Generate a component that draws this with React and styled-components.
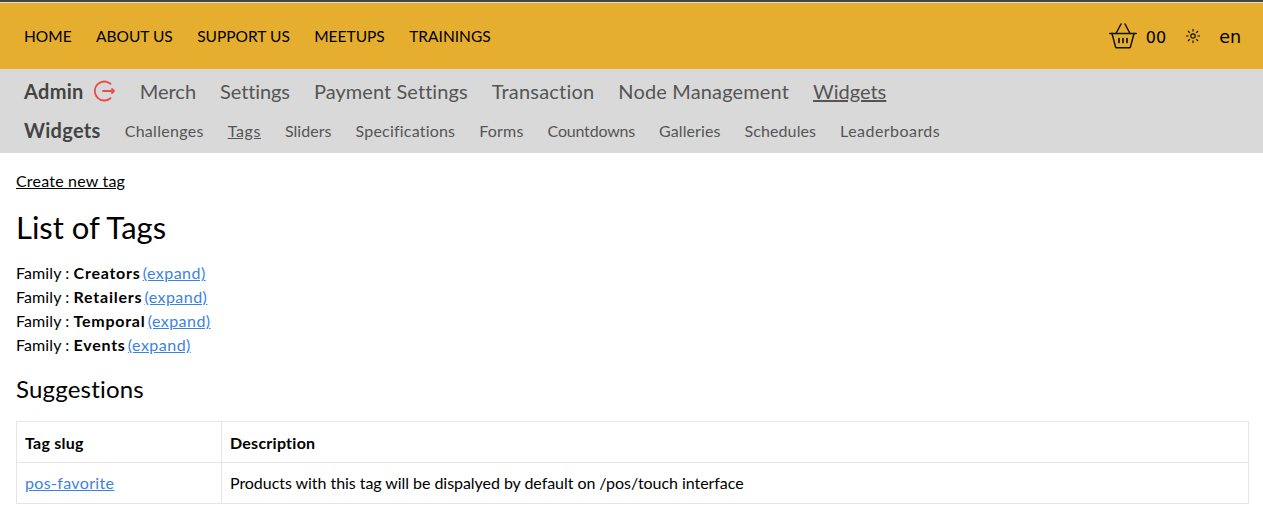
import React from 'react';
import styled, { createGlobalStyle } from 'styled-components';

const GlobalStyle = createGlobalStyle`
  html, body { margin: 0; padding: 0; background: #fff; }
  body { font-family: "Lato", "Liberation Sans", sans-serif; color: #000; }
  a { color: inherit; }
`;

const TopLine = styled.div`
  height: 2px;
  background: #444;
  border-bottom: 1px solid #ddd;
`;

const MainBar = styled.header`
  display: flex;
  align-items: center;
  justify-content: space-between;
  height: 66px;
  padding: 0 22px 0 24px;
  background: #e5ae2e;
`;

const MainNav = styled.nav`
  display: flex;
  gap: 24.4px;
  margin-top: -1px;
`;

const MainLink = styled.a`
  font-size: 15.5px;
  text-decoration: none;
  color: #000;
`;

const Tools = styled.div`
  display: flex;
  align-items: center;
`;

const Count = styled.span`
  font-family: "DejaVu Sans", sans-serif;
  font-size: 16px;
  margin: 2px 20px 0 9px;
`;

const Lang = styled.span`
  font-family: "DejaVu Sans", sans-serif;
  font-size: 17.5px;
  margin: 2px 0 0 19px;
`;

const AdminBar = styled.div`
  background: #d9d9d9;
  height: 84px;
  padding: 0 24px;
  color: #444;
`;

const AdminRow = styled.div`
  display: flex;
  align-items: center;
  height: ${p => p.$height}px;
  gap: 24px;
`;

const RowTitle = styled.strong`
  font-size: 20px;
  font-weight: 700;
  letter-spacing: 0.3px;
  color: #444;
`;

const AdminLink = styled.a`
  font-size: 20px;
  letter-spacing: ${p => p.$track}px;
  color: #555;
  text-decoration: ${p => (p.$active ? 'underline' : 'none')};
`;

const SubLink = styled.a`
  font-size: 16px;
  letter-spacing: ${p => p.$track}px;
  color: #555;
  text-decoration: ${p => (p.$active ? 'underline' : 'none')};
`;

const LogoutWrap = styled.span`
  display: inline-flex;
  margin: 0 0 0 -14px;
`;

const Content = styled.main`
  padding: 19px 14px 0 16px;
  font-size: 16px;
`;

const NewLink = styled.a`
  display: block;
  line-height: 18px;
  letter-spacing: 0.2px;
  color: #000;
`;

const Title = styled.h1`
  margin: 19px 0 16px;
  font-size: 31px;
  font-weight: 400;
  line-height: 36px;
`;

const Family = styled.div`
  line-height: 24px;
  letter-spacing: 0.1px;

  strong {
    letter-spacing: 0.75px;
  }
`;

const TextLink = styled.a`
  color: #3b82e6;
`;

const ExpandLink = styled(TextLink)`
  margin-left: -2px;
  letter-spacing: 0.47px;
`;

const Subtitle = styled.h2`
  margin: 17px 0 17px;
  font-size: 24px;
  font-weight: 400;
  letter-spacing: 0.2px;
  line-height: 30px;
`;

const Table = styled.table`
  width: 100%;
  table-layout: fixed;
  border-collapse: collapse;
  font-size: 16px;
`;

const Th = styled.th`
  box-sizing: border-box;
  border: 1px solid #e5e5e5;
  padding: 0 8px;
  height: 41px;
  text-align: left;
  font-weight: 700;
  letter-spacing: 0.25px;
  width: ${p => p.$width || 'auto'};
`;

const Td = styled.td`
  border: 1px solid #e5e5e5;
  padding: 0 8px 2px;
  height: 38px;
  letter-spacing: ${p => p.$spacing || '-0.05px'};
`;

const mainLinks = ['HOME', 'ABOUT US', 'SUPPORT US', 'MEETUPS', 'TRAININGS'];
const adminLinks = [
  { label: 'Merch', track: 0 },
  { label: 'Settings', track: -0.1 },
  { label: 'Payment Settings', track: 0.07 },
  { label: 'Transaction', track: 0.2 },
  { label: 'Node Management', track: 0.15 },
  { label: 'Widgets', track: 0 }
];
const widgetLinks = [
  { label: 'Challenges', track: 0.3 },
  { label: 'Tags', track: 0.6 },
  { label: 'Sliders', track: 0.05 },
  { label: 'Specifications', track: 0.2 },
  { label: 'Forms', track: 0.2 },
  { label: 'Countdowns', track: -0.2 },
  { label: 'Galleries', track: 0.1 },
  { label: 'Schedules', track: 0.1 },
  { label: 'Leaderboards', track: 0.45 }
];
const families = ['Creators', 'Retailers', 'Temporal', 'Events'];

const Basket = () => (
  <svg width="28" height="26" viewBox="0 0 28 26" fill="none" stroke="#111" strokeWidth="1.5" strokeLinecap="round" strokeLinejoin="round">
    <path d="M0.8 10.5h26.4" />
    <path d="M3 10.5l3.6 13.6a1 1 0 0 0 1 .7h12.8a1 1 0 0 0 1-.7L25 10.5" />
    <path d="M7 10.5l5-9.5M21 10.5l-5-9.5" />
    <path d="M10 15.5v4M14 15.5v4M18 15.5v4" strokeWidth="1.7" />
  </svg>
);

const Sun = () => (
  <svg width="14" height="14" viewBox="0 0 14 14" fill="none" stroke="#111" strokeWidth="1.2">
    <circle cx="7" cy="7" r="2.2" />
    <path d="M7 0v2.6M7 11.4V14M0 7h2.6M11.4 7H14M2 2l1.8 1.8M10.2 10.2L12 12M2 12l1.8-1.8M10.2 3.8L12 2" />
  </svg>
);

const Logout = () => (
  <svg width="22" height="22" viewBox="0 0 22 22" fill="none" stroke="#ea4b4b" strokeWidth="1.8" strokeLinecap="round" strokeLinejoin="round">
    <path d="M16.5 3.8A9.5 9.5 0 1 0 16.5 18.2" />
    <path d="M9 11h11M18 9l2 2-2 2" />
  </svg>
);

const App = () => (
  <>
    <GlobalStyle />
    <TopLine />
    <MainBar>
      <MainNav>
        {mainLinks.map(l => <MainLink href="#" key={l}>{l}</MainLink>)}
      </MainNav>
      <Tools>
        <Basket />
        <Count>00</Count>
        <Sun />
        <Lang>en</Lang>
      </Tools>
    </MainBar>
    <AdminBar>
      <AdminRow $height={43}>
        <RowTitle>Admin</RowTitle>
        <LogoutWrap><Logout /></LogoutWrap>
        {adminLinks.map(l => (
          <AdminLink href="#" key={l.label} $track={l.track} $active={l.label === 'Widgets'}>{l.label}</AdminLink>
        ))}
      </AdminRow>
      <AdminRow $height={36}>
        <RowTitle>Widgets</RowTitle>
        {widgetLinks.map(l => (
          <SubLink href="#" key={l.label} $track={l.track} $active={l.label === 'Tags'}>{l.label}</SubLink>
        ))}
      </AdminRow>
    </AdminBar>
    <Content>
      <NewLink href="#">Create new tag</NewLink>
      <Title>List of Tags</Title>
      {families.map(f => (
        <Family key={f}>Family : <strong>{f}</strong> <ExpandLink href="#">(expand)</ExpandLink></Family>
      ))}
      <Subtitle>Suggestions</Subtitle>
      <Table>
        <thead>
          <tr><Th $width="205px">Tag slug</Th><Th>Description</Th></tr>
        </thead>
        <tbody>
          <tr>
            <Td $spacing="0.35px"><TextLink href="#">pos-favorite</TextLink></Td>
            <Td>Products with this tag will be dispalyed by default on /pos/touch interface</Td>
          </tr>
        </tbody>
      </Table>
    </Content>
  </>
);

export default App;
